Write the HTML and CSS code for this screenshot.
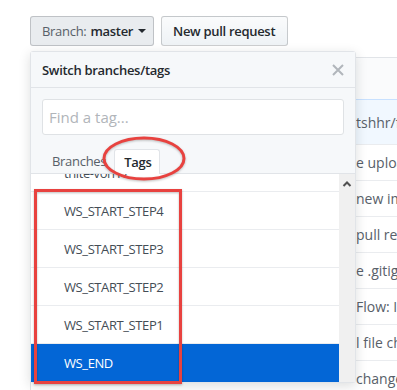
FILE: index.html
```html
<!DOCTYPE html>
<html lang="en">
<head>
  <meta charset="UTF-8">
  <meta name="viewport" content="width=device-width, initial-scale=1.0">
  <title>Switch branches/tags</title>
  <link rel="stylesheet" href="styles.css">
</head>
<body>
  <div class="page">
    <div class="toolbar">
      <button class="btn btn-branch">Branch: <b>master</b><span class="caret"></span></button>
      <button class="btn btn-new">New pull request</button>
    </div>

    <!-- file list behind the dropdown -->
    <div class="files">
      <div class="files-head"></div>
      <div class="files-row tease"><span class="msg">tshhr/feature</span></div>
      <div class="files-row"><span class="msg">e upload</span></div>
      <div class="files-row"><span class="msg">new image</span></div>
      <div class="files-row"><span class="msg">pull request</span></div>
      <div class="files-row"><span class="msg">e .gitignore</span></div>
      <div class="files-row"><span class="msg">Flow: Init</span></div>
      <div class="files-row"><span class="msg">l file changes</span></div>
      <div class="files-row"><span class="msg">changes</span></div>
    </div>

    <div class="select-menu">
      <div class="menu-header">
        <span class="menu-title">Switch branches/tags</span>
        <svg class="menu-close" width="12" height="12" viewBox="0 0 12 12"><path d="M1 1 L11 11 M11 1 L1 11" stroke="#b1b6bb" stroke-width="2"/></svg>
      </div>
      <div class="menu-filter">
        <input type="text" class="filter-input" placeholder="Find a tag...">
        <div class="menu-tabs">
          <span class="tab">Branches</span>
          <span class="tab selected">Tags</span>
        </div>
      </div>
      <div class="menu-body">
        <div class="menu-list">
          <div class="menu-item partial">tnite-von17</div>
          <div class="menu-item">WS_START_STEP4</div>
          <div class="menu-item">WS_START_STEP3</div>
          <div class="menu-item">WS_START_STEP2</div>
          <div class="menu-item">WS_START_STEP1</div>
          <div class="menu-item active">WS_END</div>
        </div>
        <div class="scrollbar">
          <svg width="16" height="16" viewBox="0 0 16 16"><path d="M4.5 10 L8 6.5 L11.5 10" fill="none" stroke="#505050" stroke-width="2"/></svg>
        </div>
      </div>
    </div>

    <!-- red annotation marks -->
    <svg class="annot" width="397" height="390" viewBox="0 0 397 390">
      <ellipse cx="144" cy="158.5" rx="40" ry="20.5" fill="none" stroke="#e8423f" stroke-width="3"/>
      <rect x="35.5" y="190.5" width="145" height="192" fill="none" stroke="#e8423f" stroke-width="3"/>
    </svg>
  </div>
</body>
</html>
```

FILE: styles.css
```css
body {
  margin: 0;
  font-family: "Open Sans", "Noto Sans", sans-serif;
  font-size: 13px;
  color: #24292e;
  background: #fff;
  overflow: hidden;
}
.page {
  position: relative;
  width: 397px;
  height: 390px;
  overflow: hidden;
}
.toolbar {
  display: flex;
  gap: 7px;
  padding: 16px 0 0 30px;
}
.btn {
  height: 30px;
  padding: 0 11px;
  font-family: inherit;
  font-size: 13px;
  letter-spacing: -0.3px;
  white-space: nowrap;
  color: #24292e;
  border: 1px solid rgba(27,31,35,0.2);
  border-radius: 3px;
  background: linear-gradient(#fafbfc, #eff3f6 90%);
  display: flex;
  align-items: center;
}
.btn-branch {
  width: 124px;
  background: #e9ecef;
  color: #586069;
}
.btn-branch b {
  color: #24292e;
  font-weight: 600;
  margin-left: 4px;
}
.caret {
  margin-left: 5px;
  border-top: 4px solid #24292e;
  border-left: 4px solid transparent;
  border-right: 4px solid transparent;
}
.btn-new {
  width: 127px;
  font-weight: 600;
}

.files {
  margin: 11px 0 0 30px;
  width: 600px;
  border: 1px solid #e1e4e8;
  border-radius: 3px;
}
.files-head {
  height: 41px;
  background: #fafbfc;
}
.files-row {
  height: 35px;
  border-top: 1px solid #eaecef;
  display: flex;
  align-items: center;
  padding-left: 325px;
  font-size: 14px;
  color: #586069;
}
.files-row.tease {
  height: 44px;
  background: #f1f8ff;
  border-top: 1px solid #c8e1ff;
}

.select-menu {
  position: absolute;
  left: 30px;
  top: 51px;
  width: 324px;
  background: #fff;
  border: 1px solid #e1e4e8;
  border-radius: 3px;
  box-shadow: 0 3px 12px rgba(27,31,35,0.15);
}
.menu-header {
  height: 35px;
  display: flex;
  align-items: center;
  justify-content: space-between;
  padding: 0 11px;
  background: #f6f8fa;
  border-bottom: 1px solid #e1e4e8;
}
.menu-title {
  font-size: 13px;
  font-weight: 600;
  letter-spacing: -0.3px;
}
.menu-filter {
  background: #f6f8fa;
  padding: 11px 11px 0;
  border-bottom: 1px solid #e1e4e8;
}
.filter-input {
  display: block;
  box-sizing: border-box;
  width: 302px;
  height: 36px;
  padding: 0 6px;
  font-family: inherit;
  font-size: 15px;
  border: 1px solid #dfe2e5;
  border-radius: 3px;
}
.filter-input::placeholder {
  color: #b1b5ba;
}
.menu-tabs {
  display: flex;
  margin-top: 14px;
  letter-spacing: -0.3px;
}
.tab {
  height: 24px;
  padding: 0 8px 0 10px;
  display: flex;
  align-items: center;
  color: #586069;
  margin-bottom: -1px;
}
.tab.selected {
  color: #24292e;
  font-weight: 600;
  background: #fff;
  border: 1px solid #e1e4e8;
  border-bottom: 0;
  border-radius: 3px 3px 0 0;
  padding: 0 8px 0 9px;
}
.menu-body {
  display: flex;
  height: 208px;
  overflow: hidden;
}
.menu-list {
  flex: 1;
}
.menu-item {
  height: 37px;
  display: flex;
  align-items: center;
  padding-left: 33px;
  color: #444d56;
  letter-spacing: -0.4px;
  border-bottom: 1px solid #eaecef;
}
.menu-item.partial {
  margin-top: -20px;
}
.menu-item.active {
  background: #0366d6;
  color: #fff;
  border-bottom-color: #0366d6;
}
.scrollbar {
  width: 16px;
  background: #f0f0f0;
  display: flex;
  justify-content: center;
  padding-top: 2px;
}
.annot {
  position: absolute;
  left: 0;
  top: 0;
  pointer-events: none;
  filter: drop-shadow(0 1px 1px rgba(0,0,0,0.25));
}
```
